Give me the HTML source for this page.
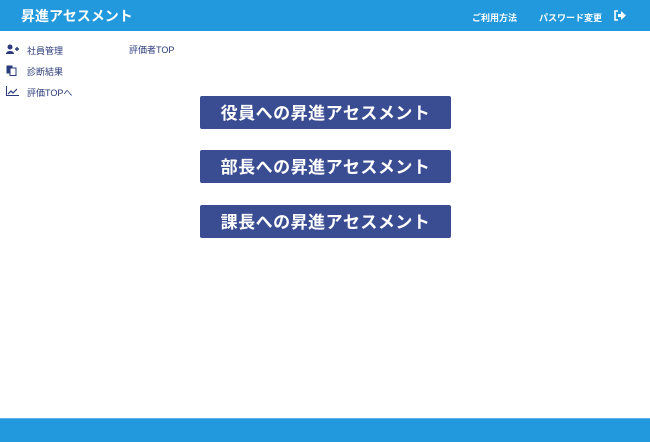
<!DOCTYPE html>
<html><head><meta charset="utf-8"><style>
*{margin:0;padding:0;box-sizing:border-box}
body{width:650px;height:442px;overflow:hidden;background:#fff;font-family:"Liberation Sans","Noto Sans CJK JP",sans-serif;position:relative}
.hd{position:absolute;left:0;top:0;width:650px;height:31px;background:#2399dd}
.logo{position:absolute;left:21px;top:6px;color:#fff;font-size:14px;font-weight:bold}
.nav{position:absolute;top:11px;color:#fff;font-size:9px;font-weight:600}
.ft{position:absolute;left:0;top:418px;width:650px;height:24px;background:#2399dd;border-top:1px solid #5ab2e6}
.side{position:absolute;left:27px;font-size:9px;color:#2a3a7a}
.ic{position:absolute;left:6px}
.btn{position:absolute;left:200px;width:251px;height:33px;background:#3a4d92;border-radius:2px;color:#fff;font-size:17px;font-weight:bold;text-align:center;line-height:35px;letter-spacing:0.5px}
</style></head><body>
<div class="hd">
<div class="logo">昇進アセスメント</div>
<div class="nav" style="left:472px">ご利用方法</div>
<div class="nav" style="left:539px">パスワード変更</div>
<svg style="position:absolute;left:614px;top:10px" width="12" height="11" viewBox="0 0 12 11"><path d="M4 1H1v9h3" stroke="#fff" stroke-width="1.6" fill="none"/><path d="M4 4h3V1l5 4.5L7 10V7H4z" fill="#fff"/></svg>
</div>
<svg class="ic" style="top:44px" width="13" height="10" viewBox="0 0 13 10"><circle cx="4" cy="3" r="2.5" fill="#2a3a7a"/><path d="M0 10c0-4 8-4 8 0z" fill="#2a3a7a"/><path d="M9 5h4M11 3v4" stroke="#2a3a7a" stroke-width="1.4"/></svg>
<div class="side" style="top:44px">社員管理</div>
<svg class="ic" style="top:65px" width="11" height="11" viewBox="0 0 11 11"><rect x="0.5" y="0.5" width="6" height="8" fill="#2a3a7a"/><rect x="4" y="3" width="6" height="7.5" fill="#fff" stroke="#2a3a7a"/></svg>
<div class="side" style="top:65px">診断結果</div>
<svg class="ic" style="top:86px" width="13" height="10" viewBox="0 0 13 10"><path d="M0.5 0v9.5H13" stroke="#2a3a7a" fill="none"/><path d="M2 8l3-3 2 2 4-4" stroke="#2a3a7a" stroke-width="1.2" fill="none"/></svg>
<div class="side" style="top:86px">評価TOPへ</div>
<div class="side" style="left:129px;top:43px">評価者TOP</div>
<div class="btn" style="top:96px">役員への昇進アセスメント</div>
<div class="btn" style="top:150px">部長への昇進アセスメント</div>
<div class="btn" style="top:205px">課長への昇進アセスメント</div>
<div class="ft"></div>
</body></html>
